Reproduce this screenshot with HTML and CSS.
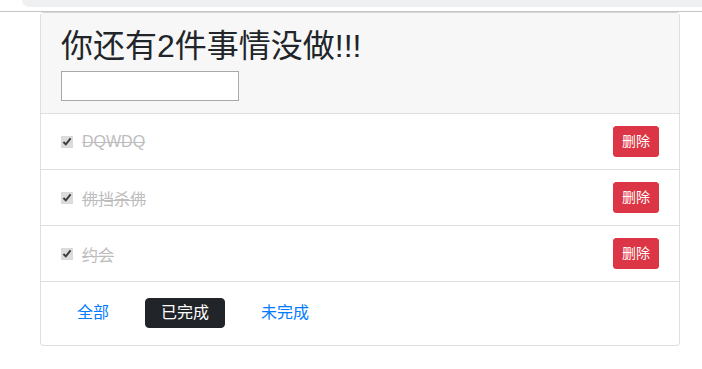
FILE: index.html
```html
<!DOCTYPE html>
<html lang="zh-CN">
<head>
    <meta charset="UTF-8">
    <meta name="viewport" content="width=device-width, initial-scale=1.0">
    <title>待办事项</title>
    <link rel="stylesheet" href="styles.css">
</head>
<body>

<div class="top-strip">
    <div class="top-bar"></div>
</div>

<div class="todo-card">
    <div class="todo-header">
        <h2>你还有2件事情没做!!!</h2>
        <input type="text" class="todo-input">
    </div>

    <ul class="todo-list">
        <li class="todo-item">
            <label class="todo-label">
                <input type="checkbox" checked>
                <span class="done">DQWDQ</span>
            </label>
            <button class="btn-delete">删除</button>
        </li>
        <li class="todo-item">
            <label class="todo-label">
                <input type="checkbox" checked>
                <span class="done">佛挡杀佛</span>
            </label>
            <button class="btn-delete">删除</button>
        </li>
        <li class="todo-item">
            <label class="todo-label">
                <input type="checkbox" checked>
                <span class="done">约会</span>
            </label>
            <button class="btn-delete">删除</button>
        </li>
    </ul>

    <div class="todo-footer">
        <button class="filter">全部</button>
        <button class="filter active">已完成</button>
        <button class="filter">未完成</button>
    </div>
</div>

</body>
</html>
```

FILE: styles.css
```css
body {
    margin: 0;
    background-color: #fff;
    color: #212529;
    font-family: "Liberation Sans", "Noto Sans CJK SC", sans-serif;
    font-size: 16px;
}
.top-strip {
    height: 11px;
    border-bottom: 1px solid #c4c4c4;
}
.top-bar {
    margin-left: 22px;
    height: 7px;
    background-color: #eff0f2;
    border-bottom-left-radius: 8px;
}
.todo-card {
    width: 640px;
    margin-left: 40px;
    border: 1px solid #dfdfdf;
    border-top-color: #d8d8d8;
    border-radius: 4px;
    box-sizing: border-box;
}
.todo-header {
    background-color: #f7f7f7;
    padding: 12px 20px;
    border-bottom: 1px solid #dfdfdf;
}
.todo-header h2 {
    margin: 0 0 6px 0;
    padding-top: 2px;
    font-size: 32px;
    font-weight: 400;
    line-height: 1.2;
}
.todo-input {
    display: block;
    width: 178px;
    height: 30px;
    box-sizing: border-box;
    margin: 0;
    border: 1px solid #a9a9a9;
    background-color: #fff;
}
.todo-list {
    list-style: none;
    margin: 0;
    padding: 0;
}
.todo-item {
    display: flex;
    align-items: center;
    justify-content: space-between;
    padding: 12px 20px;
    border-bottom: 1px solid #dfdfdf;
}
.todo-label {
    display: flex;
    align-items: center;
}
.todo-label input {
    width: 12px;
    height: 12px;
    margin: 0 9px 0 0;
    accent-color: #dcdcdc;
}
.done {
    color: #bdbdbd;
    text-decoration: line-through;
}
.btn-delete {
    font-family: inherit;
    font-size: 14px;
    line-height: 21px;
    padding: 4px 8px;
    color: #fff;
    background-color: #dc3545;
    border: 1px solid #dc3545;
    border-radius: 3px;
}
.todo-footer {
    display: flex;
    padding: 16px 20px 17px;
}
.filter {
    font-family: inherit;
    font-size: 16px;
    line-height: 24px;
    padding: 2px 15px;
    margin-right: 20px;
    color: #007bff;
    background: none;
    border: 1px solid transparent;
    border-radius: 4px;
}
.filter.active {
    color: #fff;
    background-color: #212529;
    border-color: #212529;
}
```
